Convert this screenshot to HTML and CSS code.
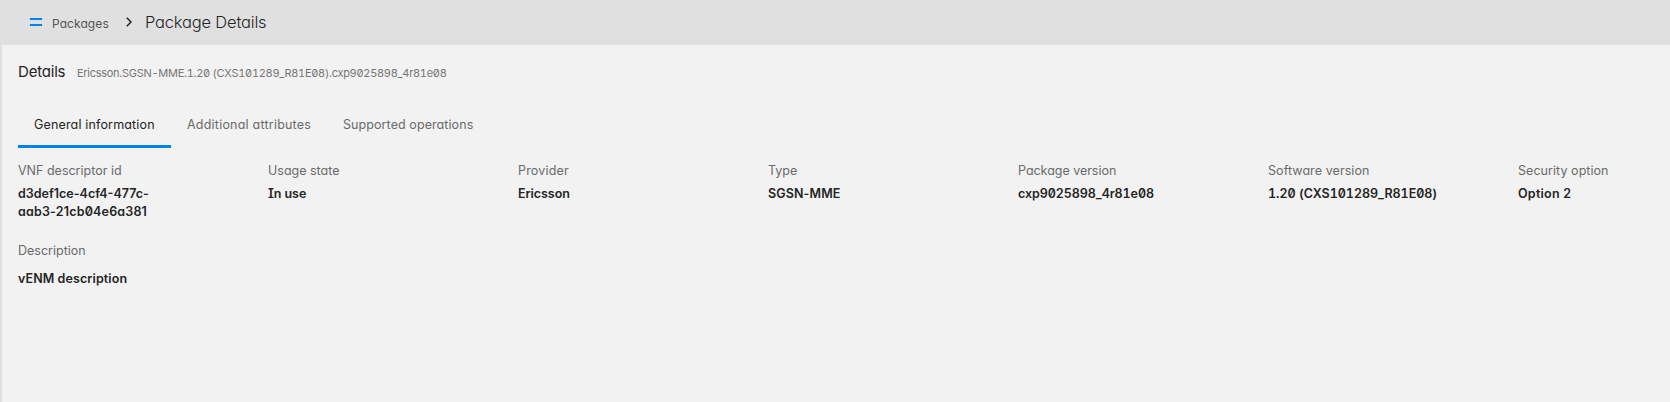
FILE: index.html
```html
<!DOCTYPE html>
<html lang="en">
<head>
<meta charset="utf-8">
<title>Package Details</title>
<link rel="stylesheet" href="styles.css">
</head>
<body>
<header class="topbar">
  <svg class="menu-icon" width="12" height="8" viewBox="0 0 12 8"><path d="M0 0h12v2H0zM0 6h12v2H0z" fill="#0082f0"/></svg>
  <a class="crumb">Packages</a>
  <svg class="chevron" width="6" height="10" viewBox="0 0 6 10"><path d="M.8 .8 5 5 .8 9.2" fill="none" stroke="#242424" stroke-width="1.5"/></svg>
  <h1 class="page-title">Package Details</h1>
</header>
<main class="panel">
  <div class="heading">
    <h2 class="heading-title">Details</h2>
    <span class="subtitle">Ericsson.SGSN-MME.1.20 (CXS101289_R81E08).cxp9025898_4r81e08</span>
  </div>
  <nav class="tabs">
    <a class="tab tab-general active">General information</a>
    <a class="tab tab-attributes">Additional attributes</a>
    <a class="tab tab-operations">Supported operations</a>
  </nav>
  <dl class="details">
    <div class="field id"><dt>VNF descriptor id</dt><dd>d3def1ce-4cf4-477c-<br><span class="id-tail">aab3-21cb04e6a381</span></dd></div>
    <div class="field usage"><dt>Usage state</dt><dd>In use</dd></div>
    <div class="field provider"><dt>Provider</dt><dd>Ericsson</dd></div>
    <div class="field type"><dt>Type</dt><dd>SGSN-MME</dd></div>
    <div class="field package"><dt>Package version</dt><dd>cxp9025898_4r81e08</dd></div>
    <div class="field software"><dt>Software version</dt><dd>1.20 (CXS101289_R81E08)</dd></div>
    <div class="field security"><dt>Security option</dt><dd>Option 2</dd></div>
  </dl>
  <dl class="description"><dt>Description</dt><dd>vENM description</dd></dl>
</main>
</body>
</html>
```
FILE: styles.css
```css
* { box-sizing: border-box; margin: 0; padding: 0; }
body {
  height: 402px;
  overflow: hidden;
  background: #e0e0e0;
  color: #242424;
  font: 12.5px/18px Inter, "Noto Sans", sans-serif;
  font-feature-settings: "cv11", "zero", "cv08";
  white-space: nowrap;
}
.topbar { display: flex; align-items: center; height: 45px; padding-left: 30px; }
.menu-icon { margin: -1px 10px 0 0; }
.crumb { width: 74px; color: #545454; padding-top: 2px; font-size: 12px; letter-spacing: 0.08px; }
.chevron { margin: -1px 13px 0 0; }
.page-title { margin-top: -1px; font-size: 16.5px; font-weight: 350; line-height: 24px; letter-spacing: -0.19px; }
.panel { height: 357px; margin-left: 2px; padding: 16px 0 0 16px; background: #f2f2f2; }
.heading { display: flex; align-items: baseline; height: 22px; }
.heading-title { width: 59px; font-size: 15px; font-weight: 400; line-height: 22px; letter-spacing: -0.2px; }
.subtitle { font-size: 11px; color: #767676; letter-spacing: -0.28px; font-feature-settings: "cv11", "zero", "cv08", "tnum"; }
.tabs { display: flex; height: 44px; margin-top: 21px; }
.tab { height: 44px; padding: 12px 0 0 16px; color: #6a6a6a; }
.tab-general { width: 153px; letter-spacing: 0.16px; }
.tab-attributes { width: 156px; letter-spacing: 0.22px; }
.tab-operations { letter-spacing: 0.08px; }
.active { color: #242424; border-bottom: 3px solid #0082f0; }
.details { display: grid; grid-template-columns: repeat(6, 250px) 1fr; margin-top: 14px; }
dt { color: #6a6a6a; }
dd { margin-top: 5px; font-weight: 600; }
.id-tail { letter-spacing: 0.18px; }
.usage dd, .provider dd { letter-spacing: -0.05px; }
.package dt { letter-spacing: -0.03px; }
.software dt { letter-spacing: 0.08px; }
.provider dt { letter-spacing: 0.18px; }
.type dd { letter-spacing: 0.12px; }
.package dd, .software dd { font-feature-settings: "cv11", "zero", "cv08", "tnum"; letter-spacing: -0.07px; }
.software dd { letter-spacing: -0.02px; }
.security dd { letter-spacing: 0.25px; }
.security dt { letter-spacing: 0.05px; }
.description { margin-top: 21px; }
.description dd { margin-top: 10px; letter-spacing: 0.1px; }
```
